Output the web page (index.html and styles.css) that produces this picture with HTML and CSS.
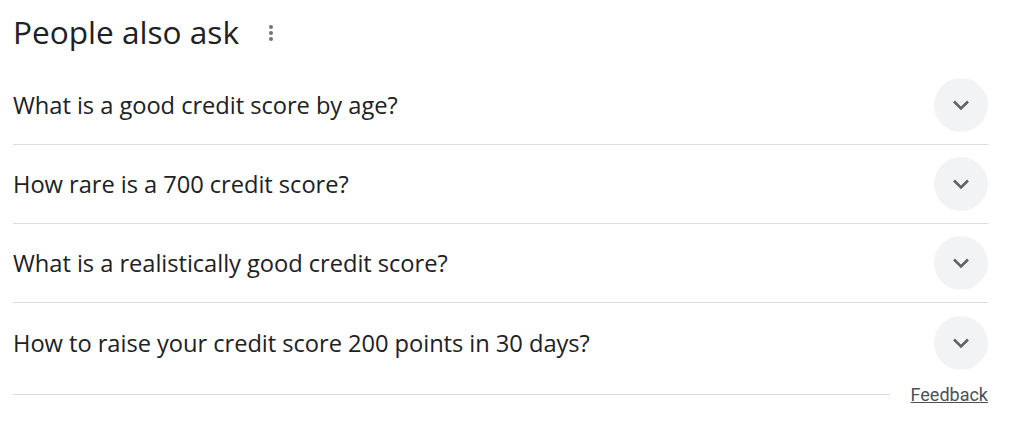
FILE: index.html
```html
<!DOCTYPE html>
<html>
<head>
<meta charset="utf-8">
<link rel="stylesheet" href="styles.css">
</head>
<body>
<div class="paa">
  <div class="paa-head">
    <h2 class="paa-title">People also ask</h2>
    <span class="paa-menu" aria-label="More options">
      <svg width="6" height="18" viewBox="0 0 6 18"><circle cx="3" cy="3" r="2" fill="#70757a"/><circle cx="3" cy="9" r="2" fill="#70757a"/><circle cx="3" cy="15" r="2" fill="#70757a"/></svg>
    </span>
  </div>
  <div class="paa-list">
    <div class="paa-row">
      <span class="paa-q">What is a good credit score by age?</span>
      <span class="paa-btn"><svg width="20" height="14" viewBox="0 0 20 14"><path d="M3 3.5 L10 10.5 L17 3.5" fill="none" stroke="#5f6368" stroke-width="2.6"/></svg></span>
    </div>
    <div class="paa-row">
      <span class="paa-q">How rare is a 700 credit score?</span>
      <span class="paa-btn"><svg width="20" height="14" viewBox="0 0 20 14"><path d="M3 3.5 L10 10.5 L17 3.5" fill="none" stroke="#5f6368" stroke-width="2.6"/></svg></span>
    </div>
    <div class="paa-row">
      <span class="paa-q">What is a realistically good credit score?</span>
      <span class="paa-btn"><svg width="20" height="14" viewBox="0 0 20 14"><path d="M3 3.5 L10 10.5 L17 3.5" fill="none" stroke="#5f6368" stroke-width="2.6"/></svg></span>
    </div>
    <div class="paa-row last">
      <span class="paa-q">How to raise your credit score 200 points in 30 days?</span>
      <span class="paa-btn"><svg width="20" height="14" viewBox="0 0 20 14"><path d="M3 3.5 L10 10.5 L17 3.5" fill="none" stroke="#5f6368" stroke-width="2.6"/></svg></span>
    </div>
  </div>
  <div class="paa-foot">
    <span class="paa-line"></span>
    <a class="paa-feedback" href="#">Feedback</a>
  </div>
</div>
</body>
</html>
```

FILE: styles.css
```css
html, body {
  margin: 0;
  padding: 0;
  background: #ffffff;
}

.paa {
  width: 975px;
  padding-left: 13px;
  font-family: "Open Sans", Roboto, Arial, sans-serif;
  color: #202124;
}

.paa-head {
  display: flex;
  align-items: center;
  height: 66px;
  gap: 29px;
}

.paa-title {
  margin: 0;
  font-size: 31.6px;
  font-weight: 400;
  line-height: 36px;
  letter-spacing: 0;
  position: relative;
  top: -1px;
}

.paa-menu {
  display: flex;
  align-items: center;
}

.paa-row {
  display: flex;
  align-items: center;
  justify-content: space-between;
  height: 78px;
  border-bottom: 1px solid #dadce0;
}

.paa-row.last {
  height: 80px;
  border-bottom: none;
}

.paa-q {
  font-size: 23.7px;
  line-height: 30px;
  letter-spacing: -0.05px;
}

.paa-btn {
  width: 54px;
  height: 54px;
  border-radius: 50%;
  background: #f1f3f4;
  display: flex;
  align-items: center;
  justify-content: center;
}

.paa-foot {
  display: flex;
  align-items: center;
  gap: 21px;
  height: 24px;
  margin-top: -1px;
}

.paa-line {
  flex: 1;
  height: 1px;
  background: #dadce0;
}

.paa-feedback {
  font-family: Roboto, Arial, sans-serif;
  font-size: 18px;
  color: #4d5156;
  text-decoration: underline;
}
```
